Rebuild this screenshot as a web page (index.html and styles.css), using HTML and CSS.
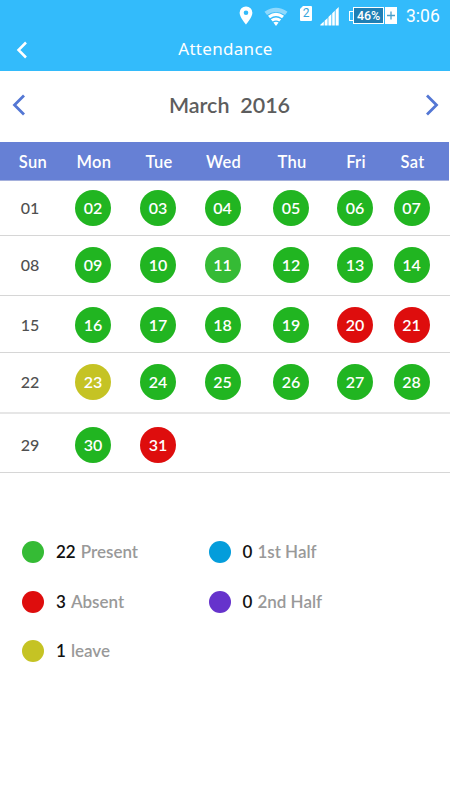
FILE: index.html
```html
<!DOCTYPE html>
<html lang="en">
  <head>
    <meta charset="UTF-8" />
    <meta name="viewport" content="width=device-width, initial-scale=1.0" />
    <title>Attendance</title>
    <link rel="stylesheet" href="styles.css">
  </head>
  <body>
    <header class="top">
      <div class="status-bar">
        <svg class="pin" width="14" height="19" viewBox="0 0 14 19">
          <path fill="#fff" fill-rule="evenodd" d="M7 .5A6.2 6.2 0 0 0 .6 6.8C.6 11.500 7 18.500 7 18.500s6.400-7 6.400-11.700A6.200 6.200 0 0 0 7 .5zM7 4.400a2.300 2.300 0 1 1 0 4.600 2.300 2.300 0 0 1 0-4.600z" />
        </svg>
        <svg class="wifi" width="24" height="20" viewBox="0 0 24 20">
          <path d="M.5 4.800Q12-3.500 23.500 4.800L21 8Q12 1.800 3 8z" fill="#fff" opacity=".45" />
          <path d="M4 8.800Q12 2.900 20 8.800L18 11.200Q12 6.900 6 11.200z" fill="#fff" />
          <path d="M6.800 12.300Q12 8.600 17.200 12.300L15.300 14.600Q12 12.300 8.700 14.600z" fill="#fff" />
          <path d="M9.400 15.600Q12 13.700 14.600 15.600L12 19z" fill="#fff" />
        </svg>
        <span class="sim">2</span>
        <svg class="signal" width="19" height="19" viewBox="0 0 19 19">
          <path d="M.3 18.500V17.800L3.800 14.500v4zM4.600 18.500v-4.700l3-2.900v7.600zM8.400 18.500V10l3-2.900v11.400zM12.200 18.500V6.300l2.600-2.500v14.700zM15.600 18.500V3L18.700 0v18.500z" fill="#fff" />
        </svg>
        <div class="battery">
          <span class="battery-tip"></span>
          <span class="battery-level">46%</span>
          <svg class="battery-plus" width="12" height="17" viewBox="0 0 12 17">
            <path d="M0 0h12v17H0z" fill="#fff" />
            <path d="M6 4.500v8M2 8.500h8" stroke="#4a9fcb" stroke-width="1.300" />
          </svg>
        </div>
        <span class="clock">3:06</span>
      </div>
      <div class="title-bar">
        <svg class="back" width="12" height="20" viewBox="0 0 12 20">
          <path d="M10 2.500L2.500 10l7.500 7.500" fill="none" stroke="#fff" stroke-width="2.500" />
        </svg>
        <h1>Attendance</h1>
      </div>
    </header>

    <div class="month-bar">
      <svg width="14" height="22" viewBox="0 0 14 22">
        <path d="M13 1.500L3.500 11l9.500 9.500" fill="none" stroke="#5477d4" stroke-width="2.800" />
      </svg>
      <h2>March&nbsp; 2016</h2>
      <svg width="14" height="22" viewBox="0 0 14 22">
        <path d="M2 1.500l9.500 9.500L2 20.500" fill="none" stroke="#5477d4" stroke-width="2.800" />
      </svg>
    </div>

    <div class="calendar">
      <div class="row head">
        <span class="sun">Sun</span><span>Mon</span><span>Tue</span><span>Wed</span><span>Thu</span><span>Fri</span><span>Sat</span>
      </div>
      <div class="row week1">
        <span class="day">01</span>
        <span class="day present">02</span>
        <span class="day present">03</span>
        <span class="day present">04</span>
        <span class="day present">05</span>
        <span class="day present">06</span>
        <span class="day present">07</span>
      </div>
      <div class="row week2">
        <span class="day">08</span>
        <span class="day present">09</span>
        <span class="day present">10</span>
        <span class="day present today">11</span>
        <span class="day present">12</span>
        <span class="day present">13</span>
        <span class="day present">14</span>
      </div>
      <div class="row week3">
        <span class="day">15</span>
        <span class="day present">16</span>
        <span class="day present">17</span>
        <span class="day present">18</span>
        <span class="day present">19</span>
        <span class="day absent">20</span>
        <span class="day absent">21</span>
      </div>
      <div class="row week4">
        <span class="day">22</span>
        <span class="day leave">23</span>
        <span class="day present">24</span>
        <span class="day present">25</span>
        <span class="day present">26</span>
        <span class="day present">27</span>
        <span class="day present">28</span>
      </div>
      <div class="row week5">
        <span class="day">29</span>
        <span class="day present">30</span>
        <span class="day absent">31</span>
      </div>
    </div>

    <div class="legend">
      <div class="item"><i class="dot today"></i><b>22</b><span>Present</span></div>
      <div class="item"><i class="dot first-half"></i><b>0</b><span>1st Half</span></div>
      <div class="item"><i class="dot absent"></i><b>3</b><span>Absent</span></div>
      <div class="item"><i class="dot second-half"></i><b>0</b><span>2nd Half</span></div>
      <div class="item"><i class="dot leave"></i><b>1</b><span>leave</span></div>
    </div>
  </body>
</html>
```
FILE: styles.css
```css
* {
  margin: 0;
  padding: 0;
  box-sizing: border-box;
}

body {
  width: 450px;
  height: 800px;
  overflow: hidden;
  background: #fff;
  font-family: Lato, "Noto Sans", sans-serif;
}

.top {
  height: 71px;
  background: #33bbfb;
  color: #fff;
}

.status-bar {
  height: 32px;
  padding: 6px 0 0 239px;
  display: flex;
  align-items: flex-start;
  font-family: Roboto, sans-serif;
}

.wifi {
  margin-left: 11px;
  margin-top: 1px;
}

.sim {
  width: 12px;
  height: 15px;
  margin-left: 12px;
  background: #fff;
  border-radius: 1px;
  clip-path: polygon(3px 0, 100% 0, 100% 100%, 0 100%, 0 3px);
  color: #33a5dc;
  font-size: 12px;
  line-height: 15px;
  text-align: center;
}

.signal {
  margin-left: 8px;
  margin-top: 1px;
}

.battery {
  display: flex;
  align-items: center;
  margin-left: 10px;
  margin-top: 1px;
}

.battery-tip {
  width: 4px;
  height: 10px;
  border: 1px solid #fff;
  border-right: none;
}

.battery-level {
  width: 31px;
  height: 17px;
  border: 1px solid #fff;
  background: #1f7fb5;
  font-size: 12.5px;
  font-weight: 500;
  line-height: 16px;
  text-align: center;
  letter-spacing: -0.2px;
}

.battery-plus {
  margin-left: 1px;
}

.clock {
  margin-left: 9px;
  font-size: 17.5px;
  line-height: 21px;
}

.title-bar {
  height: 35px;
  padding: 0 16px;
  display: flex;
  align-items: center;
}

h1 {
  flex: 1;
  padding-right: 11px;
  text-align: center;
  font: 400 17px/20px "Noto Sans", sans-serif;
  letter-spacing: 0.3px;
  margin-top: -2px;
}

.month-bar {
  height: 71px;
  padding: 0 11px 3px;
  display: flex;
  align-items: center;
  justify-content: space-between;
}

h2 {
  padding-left: 9px;
  color: #5d5d5d;
  font-size: 21.5px;
  font-weight: 600;
}

.row {
  display: grid;
  grid-template-columns: 60px 66px 64px 65px 72px 56px 57px;
  justify-items: center;
  align-items: start;
  border-bottom: 1px solid #d6d6d6;
}

.head {
  height: 39px;
  padding-left: 1px;
  margin-right: 1px;
  background: #6680d5;
  border-color: #a5b0dc;
  color: #fff;
  font-size: 16.5px;
  font-weight: 600;
  line-height: 40px;
  letter-spacing: 0.3px;
}

.sun {
  padding-left: 4px;
}

.week1 {
  height: 55px;
  padding-top: 9px;
}

.week2 {
  height: 60px;
  padding-top: 11px;
}

.week3 {
  height: 57px;
  padding-top: 11.4px;
}

.week4 {
  height: 61px;
  padding-top: 11px;
  border-bottom: 2px solid #e6e6e6;
}

.week5 {
  height: 59px;
  padding-top: 13.4px;
}

.day {
  width: 36px;
  height: 36px;
  border-radius: 50%;
  color: #505050;
  font-size: 16px;
  font-weight: 500;
  line-height: 36px;
  text-align: center;
}

.present,
.absent,
.leave {
  color: #fff;
  font-weight: 600;
}

.present {
  background: #21b521;
}

.today {
  background: #35bb35;
}

.absent {
  background: #de0d0d;
}

.leave {
  background: #c5c324;
}

.first-half {
  background: #049ddb;
}

.second-half {
  background: #6633cc;
}

.legend {
  padding: 67.500px 0 0 22px;
  display: grid;
  grid-template-columns: 186.5px 1fr;
  grid-template-rows: 22px 22px 22px;
  row-gap: 28px;
}

.item {
  display: flex;
  align-items: center;
  font-size: 17px;
  line-height: 20px;
}

.item:last-child {
  margin-top: -1px;
}

.dot {
  width: 22px;
  height: 22px;
  margin-right: 12px;
  border-radius: 50%;
}

.item b {
  margin-right: 5px;
  color: #111;
  font-weight: 600;
}

.item span {
  color: #999;
  font-weight: 600;
}
```
